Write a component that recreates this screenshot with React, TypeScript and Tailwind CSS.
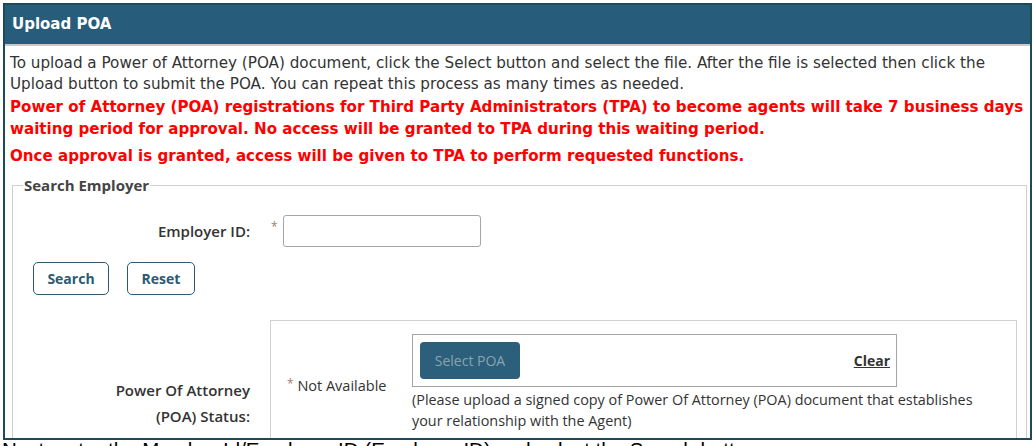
import React from "react";

const tahoma = { fontFamily: '"DejaVu Sans", Verdana, sans-serif' };
const segoe = { fontFamily: '"Open Sans", "Noto Sans", sans-serif' };

export default function App() {
  return (
    <div className="w-[1033px] h-[446px] overflow-hidden bg-white">
      {/* Upload POA panel */}
      <div className="ml-[3px] mt-[3px] w-[1029px] h-[437px] border-2 border-[#1e4a58] overflow-hidden flex flex-col">
        <div
          className="h-[41px] shrink-0 bg-[#275c7a] border-b-2 border-[#c9c9c9] flex items-center pl-[7px] text-white font-bold text-[15px]"
          style={tahoma}
        >
          Upload POA
        </div>

        <div className="pl-[5px] pr-[2px] pt-[7px]">
          <p className="text-[15.2px] leading-[21px] text-[#333] whitespace-nowrap" style={tahoma}>
            To upload a Power of Attorney (POA) document, click the Select button and select the file. After the file is selected then click the
            <br />
            Upload button to submit the POA. You can repeat this process as many times as needed.
          </p>
          <p className="mt-px text-[15.1px] leading-[22px] font-bold text-[#ff0000] whitespace-nowrap" style={tahoma}>
            Power of Attorney (POA) registrations for Third Party Administrators (TPA) to become agents will take 7 business days
            <br />
            waiting period for approval. No access will be granted to TPA during this waiting period.
          </p>
          <p className="mt-[5px] text-[15.1px] leading-[22px] font-bold text-[#ff0000]" style={tahoma}>
            Once approval is granted, access will be given to TPA to perform requested functions.
          </p>

          {/* Search Employer */}
          <fieldset className="mt-[8px] ml-[2px] mr-px border border-[#cfcfcf] pb-6" style={segoe}>
            <legend className="ml-[10px] px-px text-[15px] font-bold text-[#444] leading-[20px]">
              Search Employer
            </legend>

            <div className="mt-[20px] flex items-start">
              <label className="w-[237px] pt-[5px] text-right text-[15px] font-semibold text-[#333]">
                Employer ID:
              </label>
              <span className="ml-[21px] mt-[3px] text-[12px] text-[#a08070]">*</span>
              <input
                type="text"
                className="ml-[5px] w-[198px] h-[32px] rounded-[3px] border border-[#a5a5a5] bg-white"
              />
            </div>

            <div className="mt-[15px] ml-[20px] flex gap-[18px]">
              <button className="w-[76px] h-[33px] rounded-[5px] border border-[#2d5a72] bg-white text-[14px] font-bold text-[#2d5a72]">
                Search
              </button>
              <button className="w-[68px] h-[33px] rounded-[5px] border border-[#2d5a72] bg-white text-[14px] font-bold text-[#2d5a72]">
                Reset
              </button>
            </div>

            {/* POA status row */}
            <div className="mt-[25px] flex">
              <div className="w-[237px] pt-[57px] text-right text-[15px] leading-[26px] font-semibold text-[#333]">
                Power Of Attorney
                <br />
                (POA) Status:
              </div>
              <div className="ml-[20px] mr-[9px] flex-1 h-[140px] border border-[#d0d0d0] pl-[16px] pt-[13px] flex">
                <div className="w-[125px] pt-[41px] text-[14.5px] text-[#333]">
                  <span className="text-[#a08070] text-[12px] align-top">*</span> Not Available
                </div>
                <div>
                  <div className="w-[485px] h-[53px] border border-[#a5a5a5] flex items-center justify-between pl-[7px] pr-[6px]">
                    <button className="w-[100px] h-[37px] rounded-[4px] bg-[#2b5f7b] text-[14px] text-[#8aa3b0]">
                      Select POA
                    </button>
                    <a className="text-[14px] font-bold text-[#333] underline">Clear</a>
                  </div>
                  <p className="mt-[2px] text-[14.4px] leading-[21px] text-[#333] whitespace-nowrap">
                    (Please upload a signed copy of Power Of Attorney (POA) document that establishes
                    <br />
                    your relationship with the Agent)
                  </p>
                </div>
              </div>
            </div>
          </fieldset>
        </div>
      </div>

      <p
        className="pl-[2px] text-[20.5px] leading-[20px] text-black whitespace-nowrap"
        style={{ fontFamily: '"Liberation Sans", Arial, sans-serif' }}
      >
        Next, enter the Member Id/Employer ID (Employer ID) and select the Search button
      </p>
    </div>
  );
}
